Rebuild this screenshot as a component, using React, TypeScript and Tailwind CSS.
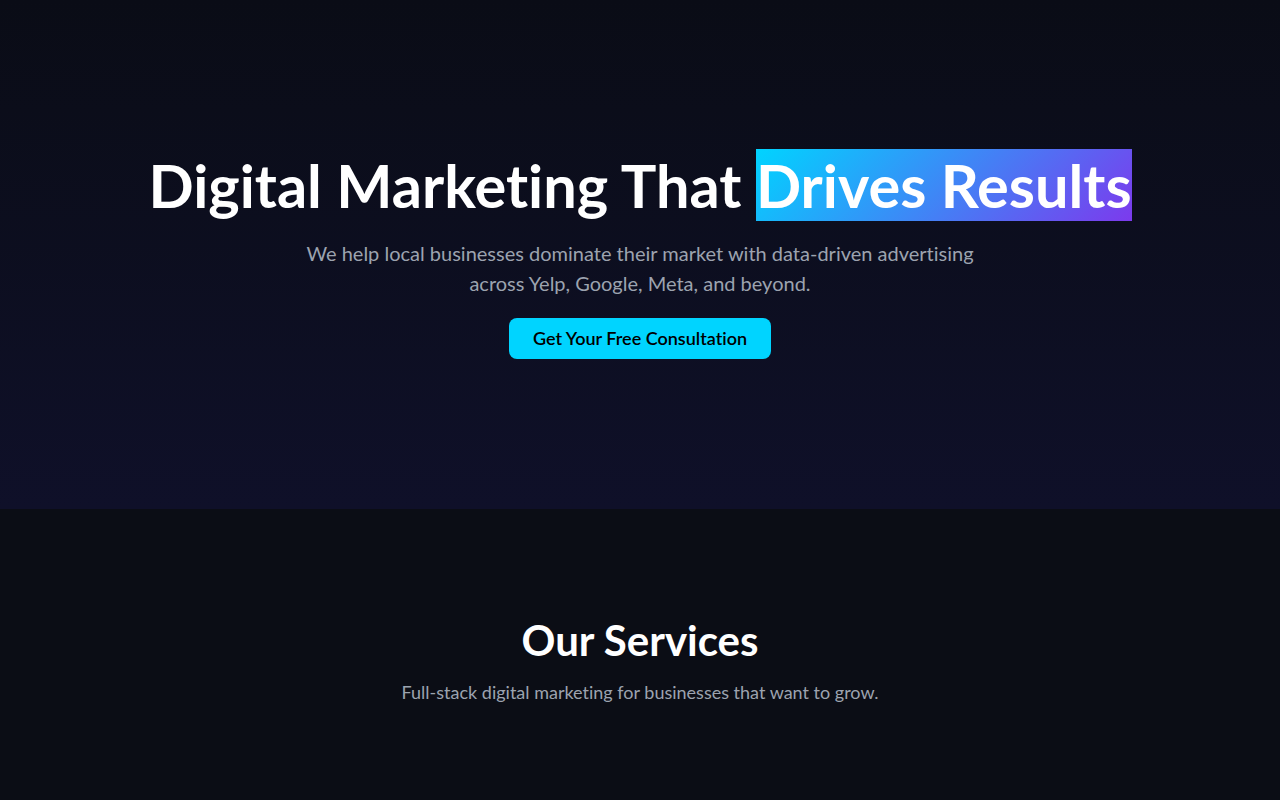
export default function App() {
  return (
    <div className="min-h-screen bg-[#0b0d15] [font-variant-ligatures:none]" style={{ fontFamily: 'Lato, "Open Sans", sans-serif' }}>
      <section className="h-[509px] bg-gradient-to-b from-[#0a0c16] to-[#0f1029] flex flex-col items-center justify-center text-center px-6">
        <h1 className="text-[59.5px] font-bold text-white leading-[1.2]">
          Digital Marketing That{" "}
          <span className="bg-[linear-gradient(135deg,#00d4ff,#7c3aed)]">Drives Results</span>
        </h1>
        <p className="mt-4 max-w-2xl text-xl leading-[30px] text-[#9ca3af]">
          We help local businesses dominate their market with data-driven advertising across Yelp, Google, Meta, and beyond.
        </p>
        <button className="mt-5 rounded-lg bg-[#00d4ff] px-6 py-[7px] text-lg leading-[27px] font-semibold text-black">
          Get Your Free Consultation
        </button>
      </section>
      <section className="pt-[105px] pb-24 text-center">
        <h2 className="text-[42px] font-bold text-white leading-tight">Our Services</h2>
        <p className="mt-[11px] text-lg text-[#9ca3af]">Full-stack digital marketing for businesses that want to grow.</p>
      </section>
    </div>
  );
}
